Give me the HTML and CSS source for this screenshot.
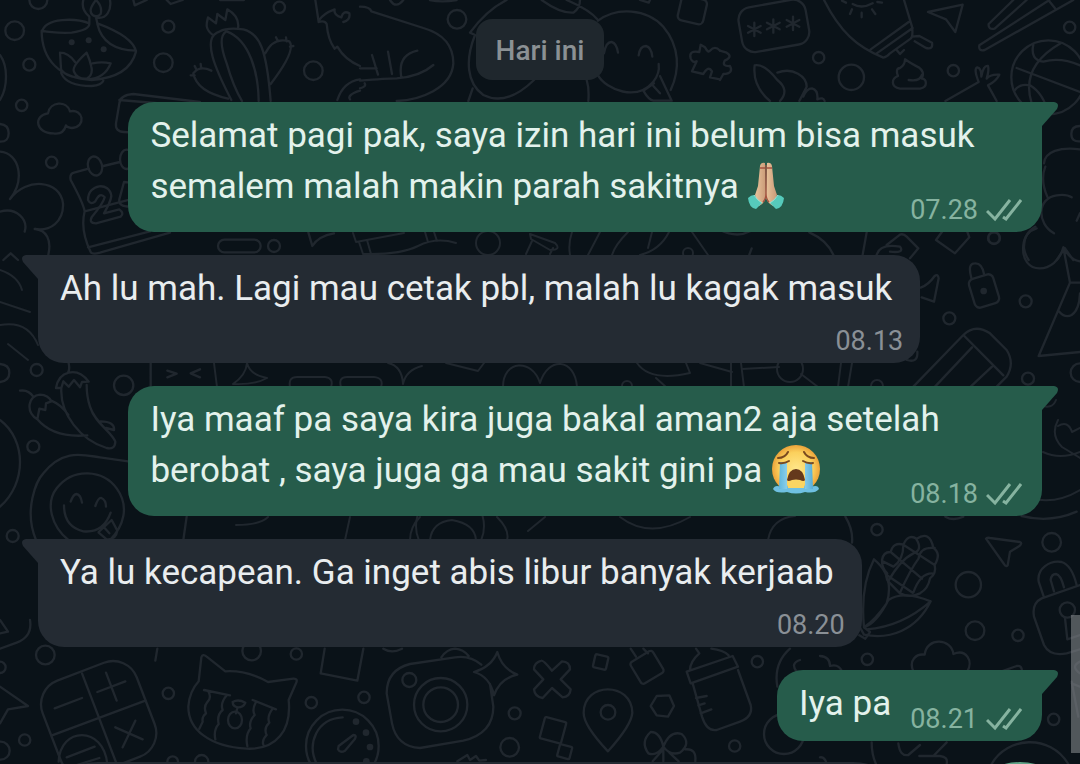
FILE: index.html
```html
<!DOCTYPE html>
<html lang="id">
<head>
<meta charset="utf-8">
<meta name="viewport" content="width=device-width, initial-scale=1">
<title>Chat</title>
<link rel="stylesheet" href="styles.css">
</head>
<body>
<svg class="wallpaper" viewBox="0 0 1080 764" preserveAspectRatio="xMidYMid slice" aria-hidden="true">
  <!-- top left: diya lamp, cactus, cloud, calendar -->
  <g transform="scale(.33333)">
    <circle cx="115" cy="0" r="27"/><circle cx="44" cy="92" r="28"/><circle cx="88" cy="194" r="18"/><circle cx="65" cy="316" r="17"/>
    <circle cx="155" cy="487" r="17"/><circle cx="505" cy="80" r="18"/><circle cx="490" cy="188" r="28"/><circle cx="838" cy="22" r="17"/><circle cx="940" cy="212" r="28"/>
    <path d="M0 165Q18 190 18 230T0 300M0 372Q26 374 26 400T0 425M0 455C60 460 75 540 30 597C80 530 180 540 189 610C192 665 150 695 104 687C140 690 155 720 145 764M0 635C50 620 85 660 74 695M10 780L32 760L54 780"/>
    <path d="M125 98C135 50 230 55 268 70Q270 90 215 98Q160 100 125 92C125 180 180 235 275 240C350 235 395 205 408 155Q400 110 292 70L288 52C320 60 335 30 330 0M268 70L268 50C250 35 246 15 250 0M288 0Q262 32 278 45Q290 54 302 42Q308 20 288 0M292 72Q310 150 408 152M180 158L184 220Q200 258 275 258Q305 256 310 242M180 158Q205 158 225 186M184 210Q200 230 232 232M260 158Q214 200 222 215Q232 238 260 236Q280 225 274 200Q270 180 260 158M278 190Q305 184 332 190Q315 235 262 238"/>
    <circle class="dot" cx="215" cy="127" r="9"/><circle class="dot" cx="266" cy="121" r="9"/><circle class="dot" cx="311" cy="148" r="9"/>
    <path d="M400 0L404 16L440 0M500 0L512 12L548 0M660 0H732"/>
    <path d="M640 106C610 85 622 65 624 52L648 70L652 42L676 60L682 28Q720 50 714 86M694 300C650 215 600 110 660 94Q680 82 730 88C780 100 800 150 812 303M680 94Q650 110 680 190Q700 260 726 303M680 94C750 120 775 220 776 303M796 160Q820 110 868 124Q890 150 812 252M684 296Q590 275 580 220Q600 195 634 212M572 226L584 226M584 198L590 210M602 192L604 206M828 112L834 124M858 112L860 124M880 138L870 140"/>
    <path d="M160 400C105 400 100 345 144 340C150 305 200 300 210 334C250 325 260 380 216 384Q200 382 198 376Q190 405 160 400Z"/>
    <path d="M600 306L400 282Q360 285 358 310L348 370Q345 395 372 396L400 398M358 300L500 312"/>
    <path d="M266 506L222 518Q208 522 212 540Q250 610 254 634Q240 690 272 756Q276 764 300 758L510 698M310 498L360 486M254 634L400 596M264 742L450 694"/><ellipse cx="285" cy="498" rx="21" ry="29" transform="rotate(-15 285 498)"/><ellipse cx="380" cy="478" rx="20" ry="29"/>
    <path d="M264 600C264 550 330 545 334 588Q332 605 312 640L358 628Q374 640 362 650L288 670Q265 670 276 650Q310 610 314 592Q300 574 286 604Q272 616 264 600ZM390 548L372 546L358 598Q354 620 390 620"/>
    <path d="M946 0Q950 25 956 66Q974 60 980 72Q984 120 1004 146L1012 140Q1035 180 1080 198M956 62Q970 40 1004 28Q1000 45 1024 52Q1030 30 1048 40Q1052 60 1030 66M1012 300Q1030 245 1080 238M1080 272Q1040 285 1050 298"/>
    <rect x="654" y="719" width="128" height="38" rx="19"/><circle cx="822" cy="738" r="18"/>
    <path d="M925 697L937 738Q955 708 1002 700"/>
  </g>
  <!-- top middle: elephant, puzzle, key -->
  <g transform="translate(360 0) scale(.33333)">
    <path d="M0 20Q30 20 34 34L190 84Q280 110 280 190C275 265 180 300 110 303M0 242Q80 235 110 235Q180 230 220 195M36 165L54 224M84 155L96 222M124 232Q112 165 172 152M0 205H50M0 265Q20 260 14 250M330 98Q380 30 440 0M330 98L345 105C315 180 320 250 370 285Q440 320 522 240M325 303L338 265M545 0Q600 40 640 38Q660 25 660 0M620 0Q690 30 714 60M680 240Q688 265 685 303"/>
    <path d="M732 160Q738 125 755 126Q770 130 774 158M836 166Q840 138 858 138Q874 142 877 170M714 62C770 20 860 25 910 80C960 140 960 210 932 270M714 226C740 270 830 305 880 245Q900 220 896 192M882 250L850 272Q866 300 880 302H935L900 228M880 258L900 280"/>
    <circle cx="291" cy="58" r="28"/><path d="M210 0Q245 8 290 0M90 0Q108 28 130 0M840 0L866 8L870 0"/>
    <rect x="958" y="-8" width="78" height="76" rx="14" transform="rotate(13 997 30)"/>
    <path d="M1080 152Q1065 135 1050 152Q1045 160 1035 142L1022 134L1018 156Q985 150 992 175Q998 190 1010 184L996 214L1030 222Q1045 195 1056 214L1050 232L1080 238"/>
    <path d="M1080 152L1100 158Q1120 170 1094 182Q1085 200 1110 198Q1122 220 1090 222L1080 240"/>
  </g>
  <!-- top right: passcode, bulb, arrow, basketball, clouds -->
  <g transform="translate(720 0) scale(.33333)">
    <rect x="60" y="10" width="204" height="136" rx="38" transform="rotate(-10 160 80)"/>
    <path d="M103 68V108M84 78L122 98M122 78L84 98M160 58V98M141 68L179 88M179 68L141 88M219 50V90M200 60L238 80M238 60L200 80"/>
    <path d="M312 0C360 95 410 140 490 173Q500 172 510 160L572 116Q580 110 576 80L552 0M452 148L566 66M470 160L578 84M530 150L540 162L552 150M576 110L598 108L636 128Q640 150 618 144L584 124M398 12Q425 28 458 10M366 2L378 8M396 28L390 42M425 38V52M456 28L466 42M472 6L486 8"/>
    <path d="M624 36L728 14L706 96L678 58ZM880 0L806 72Q804 90 824 86L920 0M988 0L778 136Q775 155 794 150L1060 0M985 0L1005 25"/>
    <circle cx="296" cy="173" r="17"/><circle cx="394" cy="232" r="38"/><circle cx="700" cy="212" r="17"/><circle cx="1049" cy="82" r="17"/><circle cx="822" cy="714" r="17"/>
    <path d="M150 303C110 270 100 230 104 196C130 190 160 225 172 240Q210 270 180 303M172 218C220 200 260 230 260 260L238 303M250 290Q260 265 276 265Q295 270 292 298Q310 290 314 303"/>
    <path d="M555 178Q555 195 540 204Q525 206 534 228C515 235 510 260 540 266H600C625 260 620 238 606 236Q615 215 596 202Q580 195 555 178M606 224Q600 246 566 240M676 303L776 246Q760 205 772 202Q785 205 784 230Q790 195 804 198Q808 210 800 236Q810 222 838 224Q830 242 804 256L830 303"/>
    <circle cx="985" cy="232" r="111"/><path d="M940 134Q930 180 970 185Q1020 170 1080 196M890 204L1080 276M1022 130Q900 200 935 310M885 270Q900 250 930 256Q970 280 985 340M1080 378Q1054 378 1054 402T1080 424M972 490C975 455 1020 440 1080 448M982 590Q960 540 976 500M1002 700C950 670 950 595 1010 586Q1040 582 1055 592M1080 640L1070 662M946 680Q910 700 912 745Q915 764 926 780M1010 780L1034 744L1060 780"/>
    <path d="M0 690Q50 715 90 694M268 697Q320 720 340 764M440 697L428 764M95 745L88 764M470 764Q480 730 540 740Q555 760 510 755M500 735L540 704Q550 700 560 710L595 745L570 775M670 690L648 720L705 760L748 712L740 690"/>
  </g>
  <!-- right of second message: padlock, eraser, dress -->
  <g transform="translate(880 220) scale(.33333)">
    <rect x="274" y="168" width="76" height="90" rx="16" transform="rotate(-17 312 213)"/><circle class="dot" cx="311" cy="213" r="10"/>
    <path d="M274 174Q262 130 284 130Q306 128 312 162M122 203Q145 195 164 168Q174 160 176 175L162 245L125 232M100 500L250 345Q285 310 330 340L380 390Q405 430 380 470L350 500M250 345L370 466M276 382L165 500M336 440L272 500M550 82C530 165 420 170 430 75Q435 35 470 25M550 82Q570 120 600 124M550 82L570 188L476 408L600 396M570 188H600M538 275Q555 295 575 285Q598 270 600 220"/>
    <circle cx="342" cy="54" r="18"/><circle cx="437" cy="244" r="18"/><circle cx="208" cy="295" r="18"/><circle cx="444" cy="476" r="18"/><circle cx="600" cy="458" r="28"/><path d="M112 395Q115 430 80 420"/>
  </g>
  <!-- left of third message: chillies, smiley -->
  <g transform="translate(0 360) scale(.33333)">
    <path d="M0 12Q28 14 28 38T0 66M0 180C80 240 80 370 0 440M206 10Q210 28 204 38M168 84Q175 45 206 38Q240 30 266 65L246 66L240 82L222 60L206 80L190 64L184 84ZM184 86C180 160 240 240 320 264Q345 270 346 245C335 215 285 190 270 140Q260 110 260 75M60 92Q85 88 100 110M112 178C75 155 85 105 120 104Q145 105 154 124L138 130L136 150L118 146ZM112 178Q160 235 262 226M154 122Q185 135 205 165M302 184Q345 185 342 210L318 204M108 540C70 450 110 360 130 340C190 265 250 285 300 292L384 304"/>
    <path d="M205 540C155 500 135 430 170 385C220 320 310 330 350 385C390 440 370 500 330 540M192 436Q192 500 250 514Q310 520 332 458M212 425Q220 402 230 402Q242 404 246 428M286 438Q295 412 304 414Q318 420 318 440M296 518L320 538M296 516L335 480L352 512Q348 540 320 538M312 502L328 520M452 8V78M502 32L530 41L502 52M600 28L572 40L600 52M560 470L550 540"/>
    <circle cx="110" cy="30" r="18"/><circle cx="371" cy="76" r="29"/><circle cx="100" cy="260" r="18"/><circle cx="38" cy="528" r="18"/>
  </g>
  <!-- narrow band between the first and second messages -->
  <g class="band">
    <path d="M353 233L356 242L404 233M359 242L363 254M367 240L371 254M363 254Q400 255 418 246T456 243M425 232L428 242M434 232L437 241"/>
    <circle cx="488" cy="243" r="12"/><path d="M526 254L532 241M550 254L553 248M530 234L555 243Q562 250 550 250L531 239ZM572 232Q568 244 570 255M600 232L588 255M628 232Q615 245 612 255M652 232L648 248M669 232Q660 250 640 255M692 232L708 255"/><circle cx="688" cy="253" r="5"/>
  </g>
  <!-- narrow band between the second and third messages -->
  <g class="band">
    <path d="M214 363L217 387M247 363Q250 375 267 378Q255 385 233 384Q246 375 247 363M290 387Q288 377 297 377H325Q334 378 331 387M341 387Q338 377 347 377H374Q384 378 381 387M388 363Q402 366 403 384Q406 370 422 366M446 363L478 371L484 363M503 387C503 360 532 358 540 383C548 356 575 358 577 387M637 363Q650 382 690 373L686 363M656 378L666 387M700 363L732 372M742 369L779 367M801 374L818 387"/><circle cx="790" cy="369" r="13"/><circle cx="627" cy="386" r="5"/><circle cx="877" cy="386" r="6"/><path d="M731 363V387M741 363L744 387M841 363L838 387M852 363L848 387"/>
  </g>
  <!-- strip at the window edges -->
  <path d="M0 270Q18 276 22 290M0 302L30 312M0 325Q28 320 38 345M8 344L28 360M1058 420Q1050 435 1062 447L1080 458M1058 426Q1068 420 1072 432L1080 428M1043 452Q1060 460 1080 452M1040 405Q1052 410 1056 400M1030 498Q1055 505 1080 490"/>
  <path d="M345 540L350 517M420 517C412 525 410 532 410 540M497 517Q510 530 507 540M430 540Q432 522 452 520Q475 524 476 540"/><circle cx="450" cy="526" r="34"/><path d="M528 531L545 517M620 517Q650 540 690 517M236 525Q260 525 268 517"/>
  <path d="M768 540Q772 518 795 516"/>
  <!-- bottom right: corn, arrow, lock, clover -->
  <g transform="translate(820 510) scale(.33333)">
    <path d="M76 20Q100 60 96 98M605 18Q690 40 770 5M376 20Q400 34 430 20M132 352Q120 230 162 148Q225 200 200 280M132 352Q170 340 205 270Q250 240 332 274C290 360 210 390 132 374L120 352M132 352L150 366L136 386L118 376M140 358Q245 350 332 274M200 280Q165 330 132 352"/>
    <path d="M186 150Q190 125 212 126Q220 95 250 104Q265 70 290 86Q330 60 340 114Q365 130 344 165Q350 190 330 205Q325 235 300 250Q270 265 240 250L205 215Q195 200 202 190Q185 175 186 150M212 126L306 206M250 104L344 165M200 195L278 248M288 86Q310 120 280 130Q240 150 204 215M344 114Q300 110 296 145Q270 180 240 248M190 155L220 170Q250 150 250 106M336 190Q300 190 280 248"/>
    <path d="M498 86Q500 82 510 84L600 96Q608 100 598 108L570 125L563 166Q558 172 552 162ZM672 262L656 215C650 175 690 150 725 156Q755 165 770 225M702 244L692 210Q694 192 708 192Q722 194 732 232M780 225L665 265Q635 280 642 320L672 405Q690 440 740 430L780 418M735 324L742 388L780 375"/>
    <circle cx="742" cy="300" r="23"/><circle cx="171" cy="59" r="17"/><circle cx="695" cy="97" r="28"/><circle cx="445" cy="224" r="38"/><circle cx="465" cy="362" r="28"/><circle cx="594" cy="376" r="17"/><circle cx="142" cy="448" r="17"/><circle cx="701" cy="628" r="17"/>
    <path d="M280 484C265 450 290 430 314 434C320 380 395 385 400 432C440 415 460 455 442 484M545 484L590 468Q606 465 606 484M0 438Q30 440 30 468Q55 460 66 484M780 455Q750 470 780 490M755 515L775 620M755 520L780 530M155 697Q155 735 168 762M235 700Q240 740 265 735L300 705M380 697L340 738M298 738H360Q385 740 380 762M515 762C560 680 690 670 745 762M0 742Q15 740 20 762"/>
  </g>
  <!-- bottom left: calculator, cat, stopwatch -->
  <g transform="translate(0 620) scale(.33333)">
    <rect x="145" y="145" width="302" height="302" rx="76" transform="rotate(-21 296 296)"/><path d="M246 160L350 432M156 346L436 242M164 265L246 234M292 216L376 184M318 158L350 242M346 322L428 358M406 302L368 382M176 425C180 320 310 315 322 432M200 412L284 380M215 440L298 414"/>
    <path d="M596 184L604 112Q608 100 620 110L676 154Q740 150 804 186L880 176Q895 175 888 190L866 240C875 330 830 390 740 386C630 380 565 330 565 260Q568 215 596 184M612 210L690 226M758 240L828 268M626 216Q635 235 622 246Q610 260 618 280Q605 290 608 305L598 326M680 226Q660 250 668 270Q650 285 656 312Q640 330 646 358M768 245Q755 270 764 285Q745 305 752 325Q735 345 742 378M818 266Q800 290 808 308Q790 325 800 345Q785 360 790 374M698 246Q715 236 736 248Q730 262 714 262Q698 260 698 246M712 264L708 280"/><ellipse cx="705" cy="300" rx="21" ry="25"/>
    <circle cx="1027" cy="378" r="109"/><path d="M1028 292C950 296 920 370 950 432M1016 378L1060 345Q1072 345 1064 358L1035 392Q1020 400 1014 388Z"/><circle class="dot" cx="1068" cy="305" r="10"/><circle class="dot" cx="1098" cy="338" r="10"/><circle class="dot" cx="1110" cy="381" r="10"/><circle class="dot" cx="1099" cy="424" r="10"/>
    <circle cx="136" cy="105" r="28"/><circle cx="505" cy="220" r="17"/><circle cx="74" cy="360" r="17"/><circle cx="755" cy="93" r="28"/><circle cx="889" cy="102" r="17"/><circle cx="934" cy="248" r="17"/><circle cx="1092" cy="232" r="17"/><circle cx="2" cy="392" r="27"/><circle cx="0" cy="142" r="17"/>
    <circle cx="518" cy="425" r="16"/><circle cx="605" cy="425" r="20"/>
    <path d="M472 86L466 122M974 86L962 160L1072 182L1090 86M0 0L24 35L0 40M90 0Q98 50 50 68L0 86M0 200L84 258L24 268L0 310"/>
  </g>
  <!-- bottom middle: camera, sparkle, pin, bottle, bow -->
  <g transform="translate(380 620) scale(.33333)">
    <path d="M304 134Q270 105 225 112L90 132Q20 150 20 220L36 310Q50 380 120 384L250 362Q340 340 340 260L330 192M184 112Q200 88 225 86Q250 88 266 108M352 96Q365 145 412 164Q360 175 342 226Q330 170 282 156Q335 140 352 96Z"/>
    <circle cx="88" cy="180" r="21"/><circle cx="182" cy="254" r="80"/><circle cx="182" cy="254" r="52"/>
    <path d="M484 122Q490 120 516 152L546 124Q570 125 570 148L542 178L572 208Q570 230 548 232L516 204L488 234Q464 230 462 208L490 178L462 148Q462 128 484 122Z"/>
    <rect x="642" y="106" width="40" height="40" rx="5" transform="rotate(13 662 126)"/><rect x="486" y="298" width="66" height="66" rx="4" transform="rotate(15 519 331)"/><rect x="535" y="376" width="38" height="38" rx="4" transform="rotate(15 554 395)"/>
    <path d="M684 394Q610 315 611 278C612 185 755 185 757 278Q755 315 684 394ZM830 228L868 226L882 258L864 290L830 286L812 258Z"/><circle cx="684" cy="277" r="22"/>
    <rect x="762" y="104" width="78" height="76" rx="9" transform="rotate(-31 801 142)"/><path d="M768 110L752 86M804 100L790 86M930 150Q930 125 958 100L948 86M994 86Q1030 90 1046 106M920 155L1058 108L1074 140L932 190ZM938 190L966 290Q980 335 1010 330L1080 305Q1120 290 1112 255L1074 150M948 234L980 228M955 256L974 250M962 280L994 268"/>
    <path d="M850 380Q840 335 812 336Q780 365 805 400Q830 410 850 380Q870 330 905 342Q935 370 900 398Q870 408 850 380M850 382V424M846 392L818 424M868 398L896 424M916 388Q950 385 946 424"/>
    <circle cx="404" cy="280" r="18"/><circle cx="389" cy="382" r="28"/><circle cx="1132" cy="125" r="17"/><circle cx="1064" cy="378" r="17"/>
    <path d="M10 86Q35 102 66 86M232 424L262 405L270 420L288 408L298 422L318 420M1230 86Q1180 130 1192 200M1260 120Q1230 130 1250 155"/><circle cx="1212" cy="342" r="60"/>
  </g>
</svg>

<main class="chat">
  <div class="date">Hari ini</div>
  <ol class="messages">
    <li class="message sent">
      <svg class="tail" viewBox="0 0 16 24" aria-hidden="true"><path d="M0 0H12Q18 1 15 7L0 24Z"/></svg>
      <p class="text">Selamat pagi pak, saya izin hari ini belum bisa masuk semalem malah makin parah sakitnya <svg class="emoji hands" viewBox="0 0 38 48" role="img" aria-label="🙏🏼">
        <defs><linearGradient id="skin" x1="0" x2="1"><stop offset="0" stop-color="#e9c49c"/><stop offset="1" stop-color="#c99a77"/></linearGradient></defs>
        <path d="M18 1Q14 0 13 4L11 24L8 33L12 44Q18 41 19 35Z" fill="url(#skin)"/>
        <path d="M20 1Q24 0 25 4L27 24L30 33L26 44Q20 41 19 35Z" fill="url(#skin)"/>
        <path d="M19 3V35M13 6H18M20 6H25M16 40Q19 37 19 31Q19 37 22 40" fill="none" stroke="#a4523f" stroke-width="1.3"/>
        <path d="M1 36Q4 33 7 33Q10 38 15 41L9 47Q2 46 1 36Z" fill="#56cabb"/><path d="M37 36Q34 33 31 33Q28 38 23 41L29 47Q36 46 37 36Z" fill="#56cabb"/>
        <path d="M7 33Q10 38 15 41M31 33Q28 38 23 41" fill="none" stroke="#95e3d7" stroke-width="1"/>
      </svg></p>
      <div class="meta"><time datetime="07:28">07.28</time><svg class="ticks" viewBox="0 0 36 24" role="img" aria-label="Terkirim"><path d="M1 13L9 21L24 2M17 19L20 21L35 2"/></svg></div>
    </li>
    <li class="message received">
      <svg class="tail" viewBox="0 0 16 24" aria-hidden="true"><path d="M16 0H4Q-2 1 1 7L16 24Z"/></svg>
      <p class="text">Ah lu mah. Lagi mau cetak pbl, malah lu kagak masuk</p>
      <div class="meta"><time datetime="08:13">08.13</time></div>
    </li>
    <li class="message sent">
      <svg class="tail" viewBox="0 0 16 24" aria-hidden="true"><path d="M0 0H12Q18 1 15 7L0 24Z"/></svg>
      <p class="text">Iya maaf pa saya kira juga bakal aman2 aja setelah berobat , saya juga ga mau sakit gini pa <svg class="emoji cry" viewBox="0 0 50 50" role="img" aria-label="😭">
        <defs><radialGradient id="face"><stop offset="0" stop-color="#ffe78a"/><stop offset=".7" stop-color="#fbd05c"/><stop offset="1" stop-color="#eca33a"/></radialGradient><linearGradient id="tears" x1="0" x2="1"><stop offset="0" stop-color="#60b7dc"/><stop offset=".5" stop-color="#b9e8f8"/><stop offset="1" stop-color="#57aeda"/></linearGradient></defs>
        <circle cx="25" cy="25" r="24" fill="url(#face)"/>
        <path d="M2 45Q4 40 10 43Q25 39 40 43Q47 40 48 45Q44 50 34 48Q25 51 16 48Q5 50 2 45Z" fill="#6fc0e2"/>
        <path d="M16 36H34L33 44H17Z" fill="#fbd562"/>
        <path d="M9 18H16V45H8ZM34 18H41L42 45H34Z" fill="url(#tears)"/>
        <path d="M16 36Q18 25 25 25Q32 25 34 36Q33 38 29 36Q25 35 21 36Q17 38 16 36Z" fill="#65391c"/>
        <path d="M7 14Q14 14 17 8M43 14Q36 14 33 8M8 19Q13 20 18 17M42 19Q37 20 32 17" fill="none" stroke="#7a4a20" stroke-width="2" stroke-linecap="round"/>
      </svg></p>
      <div class="meta"><time datetime="08:18">08.18</time><svg class="ticks" viewBox="0 0 36 24" role="img" aria-label="Terkirim"><path d="M1 13L9 21L24 2M17 19L20 21L35 2"/></svg></div>
    </li>
    <li class="message received">
      <svg class="tail" viewBox="0 0 16 24" aria-hidden="true"><path d="M16 0H4Q-2 1 1 7L16 24Z"/></svg>
      <p class="text">Ya lu kecapean. Ga inget abis libur banyak kerjaab</p>
      <div class="meta"><time datetime="08:20">08.20</time></div>
    </li>
    <li class="message sent short">
      <svg class="tail" viewBox="0 0 16 24" aria-hidden="true"><path d="M0 0H12Q18 1 15 7L0 24Z"/></svg>
      <p class="text">Iya pa</p>
      <div class="meta"><time datetime="08:21">08.21</time><svg class="ticks" viewBox="0 0 36 24" role="img" aria-label="Terkirim"><path d="M1 13L9 21L24 2M17 19L20 21L35 2"/></svg></div>
    </li>
  </ol>
  <div class="composer" aria-hidden="true"><span class="field"></span><span class="mic"></span></div>
</main>
<div class="scroll-thumb"></div>
</body>
</html>
```
FILE: styles.css
```css
* {
  box-sizing: border-box;
}

body {
  margin: 0;
  min-height: 100vh;
  position: relative;
  overflow: hidden;
  background: #0a1218;
  font-family: Roboto, "Liberation Sans", sans-serif;
}

.wallpaper {
  position: absolute;
  inset: 0;
  width: 100%;
  height: 100%;
  fill: none;
  stroke: #20272e;
  stroke-width: 7;
  stroke-linecap: round;
  stroke-linejoin: round;
}

.wallpaper .dot {
  fill: #20272e;
  stroke: none;
}

.wallpaper > path,
.wallpaper > circle,
.wallpaper .band {
  stroke-width: 2;
}

.chat {
  position: relative;
  display: flex;
  flex-direction: column;
  min-height: 100vh;
  padding: 19px 38px 0;
}

.date {
  align-self: center;
  padding: 16px 20px 13px;
  border-radius: 16px;
  background: #1f272d;
  color: #8b9194;
  font-size: 28px;
  font-weight: 500;
  line-height: 32px;
}

.messages {
  display: flex;
  flex-direction: column;
  gap: 23px;
  margin: 22px 0 0;
  padding: 0;
  list-style: none;
}

.message {
  position: relative;
  display: flex;
  flex-direction: column;
  max-width: 91%;
  padding: 8px 20px 6px 22px;
  border-radius: 26px;
}

.sent {
  align-self: flex-end;
  border-top-right-radius: 0;
  background: #265c4b;
  color: #e3f2ec;
}

.received {
  align-self: flex-start;
  padding-right: 17px;
  border-top-left-radius: 0;
  background: #242b33;
  color: #e9edef;
}

.tail {
  position: absolute;
  top: 0;
  width: 16px;
  height: 24px;
}

.sent .tail {
  left: 100%;
  fill: #265c4b;
}

.received .tail {
  right: 100%;
  fill: #242b33;
}

.text {
  margin: 0;
  font-size: 35px;
  line-height: 51px;
}

.received .text {
  margin-right: 11px;
}

.emoji {
  height: 48px;
  margin: -8px 0;
  vertical-align: -4px;
}

.hands {
  width: 38px;
}

.cry {
  width: 50px;
  height: 50px;
}

.meta {
  display: flex;
  align-items: center;
  align-self: flex-end;
  gap: 8px;
  margin-top: -18px;
  font-size: 27px;
  line-height: 32px;
  color: #86b3a0;
}

.received .meta {
  margin-top: 11px;
  color: #8a9096;
}

.ticks {
  width: 36px;
  height: 24px;
  fill: none;
  stroke: currentColor;
  stroke-width: 3;
}

.short {
  flex-direction: row;
  gap: 19px;
}

.short .text {
  margin-bottom: 6px;
}

.composer {
  display: flex;
  justify-content: space-between;
  height: 2px;
  margin: auto -38px 0 0;
  overflow: hidden;
}

.field {
  width: 84%;
  height: 120px;
  border-radius: 60px;
  background: #242b33;
}

.mic {
  width: 120px;
  height: 120px;
  border-radius: 50%;
  background: #5fa286;
}

.scroll-thumb {
  position: absolute;
  right: 0;
  bottom: 11px;
  width: 9px;
  height: 18%;
  background: rgba(140, 144, 148, 0.55);
}
```
